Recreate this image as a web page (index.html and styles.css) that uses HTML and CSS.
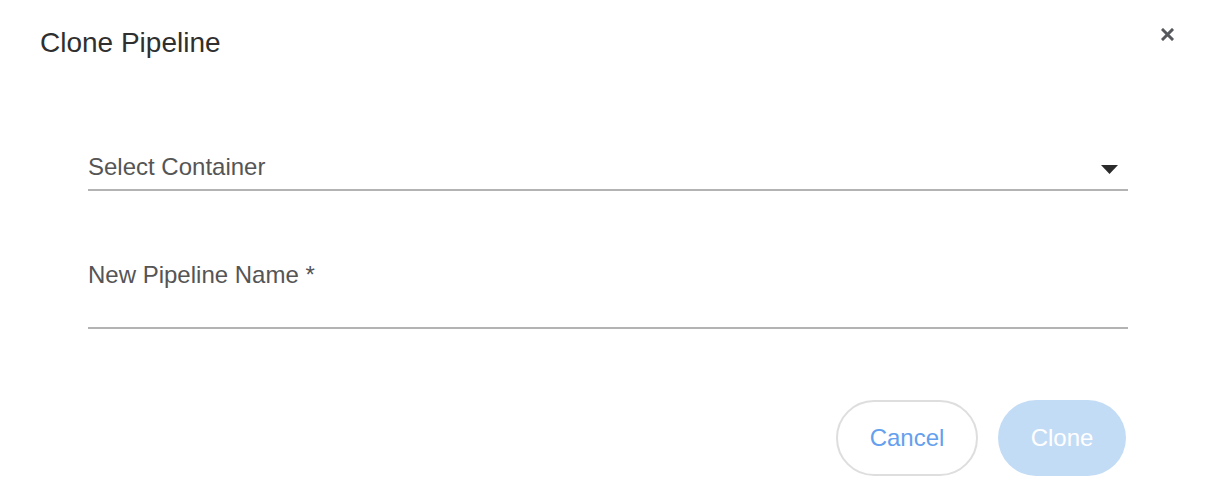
FILE: index.html
```html
<!DOCTYPE html>
<html lang="en">
<head>
<meta charset="utf-8">
<title>Clone Pipeline</title>
<link rel="stylesheet" href="styles.css">
</head>
<body>
<div class="dialog">
  <div class="header">
    <div class="title">Clone Pipeline</div>
    <button class="close" aria-label="Close">
      <svg width="13" height="13" viewBox="0 0 13 13"><path d="M2 2 L11 11 M11 2 L2 11" stroke="#55585c" stroke-width="3" stroke-linecap="square" fill="none"/></svg>
    </button>
  </div>
  <div class="form">
    <div class="field select">
      <span class="label">Select Container</span>
      <svg class="arrow" width="17" height="9" viewBox="0 0 17 9"><path d="M0 0 H17 L8.5 9 Z" fill="#2b2b2b"/></svg>
    </div>
    <div class="field text">
      <span class="label">New Pipeline Name *</span>
      <div class="input-space"></div>
    </div>
    <div class="actions">
      <button class="btn cancel">Cancel</button>
      <button class="btn clone">Clone</button>
    </div>
  </div>
</div>
</body>
</html>
```
FILE: styles.css
```css
* { box-sizing: border-box; }
html, body { margin: 0; padding: 0; background: #fff; }
body { font-family: "Liberation Sans", Arial, sans-serif; width: 1210px; height: 496px; overflow: hidden; }
.dialog { width: 1210px; }
.header {
  display: flex;
  justify-content: space-between;
  align-items: flex-start;
  padding: 27px 36px 0 40px;
}
.title { font-size: 28px; line-height: 32px; color: #2f2f2f; }
.close {
  border: 0; background: none; padding: 0; margin-top: 1px;
  width: 13px; height: 13px; display: block; cursor: pointer;
}
.close svg { display: block; }
.form { margin: 93px 82px 0 88px; }
.field { border-bottom: 2px solid #b3b3b3; }
.label { font-size: 24px; line-height: 30px; color: #555; display: block; }
.select {
  display: flex; align-items: center; justify-content: space-between;
  padding-bottom: 7px;
}
.arrow { margin-right: 10px; margin-top: 4px; display: block; }
.text { margin-top: 69px; }
.input-space { height: 37px; }
.actions {
  display: flex; justify-content: flex-end; gap: 20px;
  margin-top: 71px; padding-right: 2px;
}
.btn {
  font-family: "Liberation Sans", Arial, sans-serif;
  font-size: 24px; height: 76px; border-radius: 38px; padding: 0;
  cursor: pointer;
}
.cancel { width: 142px; background: #fff; border: 2px solid #dedede; color: #64a0ee; }
.clone { width: 128px; background: #c3dcf5; border: 0; color: #fff; }
```
